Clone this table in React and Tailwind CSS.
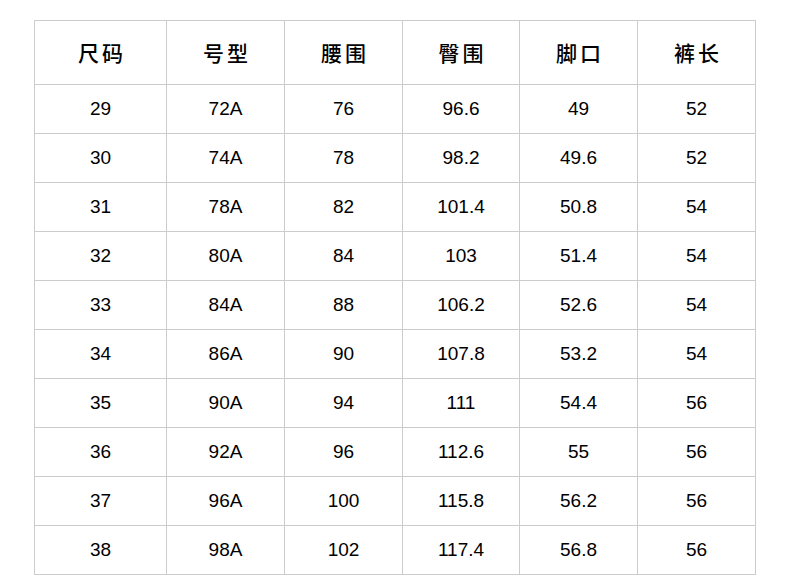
import React from "react";

const headers = ["尺码", "号型", "腰围", "臀围", "脚口", "裤长"];
const rows = [
  ["29", "72A", "76", "96.6", "49", "52"],
  ["30", "74A", "78", "98.2", "49.6", "52"],
  ["31", "78A", "82", "101.4", "50.8", "54"],
  ["32", "80A", "84", "103", "51.4", "54"],
  ["33", "84A", "88", "106.2", "52.6", "54"],
  ["34", "86A", "90", "107.8", "53.2", "54"],
  ["35", "90A", "94", "111", "54.4", "56"],
  ["36", "92A", "96", "112.6", "55", "56"],
  ["37", "96A", "100", "115.8", "56.2", "56"],
  ["38", "98A", "102", "117.4", "56.8", "56"],
];

export default function App() {
  return (
    <div className="w-[790px] h-[575px] bg-white pt-[20px] pl-[34px] overflow-hidden">
      <div
        className="grid grid-cols-[132px_118px_118px_117px_118px_118px] border-t border-l border-[#cccccc] w-[722px] text-black"
        style={{ fontFamily: '"Liberation Sans", "Noto Sans CJK SC", sans-serif' }}
      >
        {headers.map((h) => (
          <div
            key={h}
            className="h-[64px] border-r border-b border-[#cccccc] flex items-center justify-center text-[21px] font-medium tracking-[3px] pl-[3px]"
            style={{ fontFamily: '"Noto Sans CJK SC", sans-serif' }}
          >
            {h}
          </div>
        ))}
        {rows.map((r, i) =>
          r.map((c, j) => (
            <div
              key={i + "-" + j}
              className="h-[49px] border-r border-b border-[#cccccc] flex items-center justify-center text-[19px]"
            >
              {c}
            </div>
          ))
        )}
      </div>
    </div>
  );
}
